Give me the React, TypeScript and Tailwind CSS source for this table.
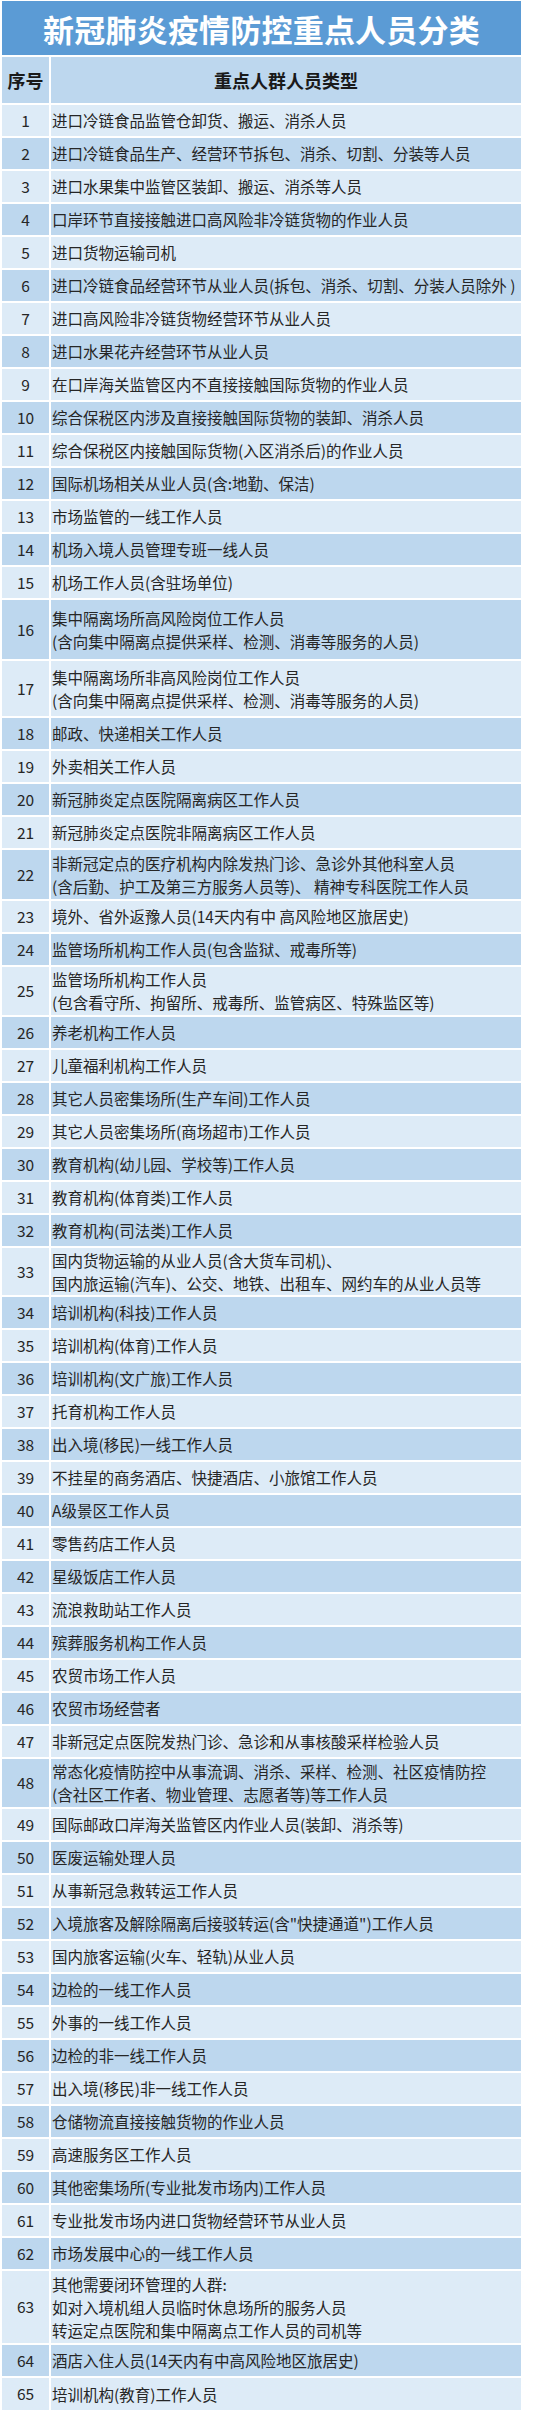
type Row = {
  no: number
  lines: string[]
  h?: string
}

const rows: Row[] = [
  { no: 1, lines: ["进口冷链食品监管仓卸货、搬运、消杀人员"] },
  { no: 2, lines: ["进口冷链食品生产、经营环节拆包、消杀、切割、分装等人员"] },
  { no: 3, lines: ["进口水果集中监管区装卸、搬运、消杀等人员"] },
  { no: 4, lines: ["口岸环节直接接触进口高风险非冷链货物的作业人员"] },
  { no: 5, lines: ["进口货物运输司机"] },
  { no: 6, lines: ["进口冷链食品经营环节从业人员(拆包、消杀、切割、分装人员除外 )"] },
  { no: 7, lines: ["进口高风险非冷链货物经营环节从业人员"] },
  { no: 8, lines: ["进口水果花卉经营环节从业人员"] },
  { no: 9, lines: ["在口岸海关监管区内不直接接触国际货物的作业人员"] },
  { no: 10, lines: ["综合保税区内涉及直接接触国际货物的装卸、消杀人员"] },
  { no: 11, lines: ["综合保税区内接触国际货物(入区消杀后)的作业人员"] },
  { no: 12, lines: ["国际机场相关从业人员(含:地勤、保洁)"] },
  { no: 13, lines: ["市场监管的一线工作人员"] },
  { no: 14, lines: ["机场入境人员管理专班一线人员"] },
  { no: 15, lines: ["机场工作人员(含驻场单位)"] },
  { no: 16, lines: ["集中隔离场所高风险岗位工作人员", "(含向集中隔离点提供采样、检测、消毒等服务的人员)"], h: "h-[59px]" },
  { no: 17, lines: ["集中隔离场所非高风险岗位工作人员", "(含向集中隔离点提供采样、检测、消毒等服务的人员)"], h: "h-[55px]" },
  { no: 18, lines: ["邮政、快递相关工作人员"] },
  { no: 19, lines: ["外卖相关工作人员"] },
  { no: 20, lines: ["新冠肺炎定点医院隔离病区工作人员"] },
  { no: 21, lines: ["新冠肺炎定点医院非隔离病区工作人员"] },
  { no: 22, lines: ["非新冠定点的医疗机构内除发热门诊、急诊外其他科室人员", "(含后勤、护工及第三方服务人员等)、 精神专科医院工作人员"], h: "h-[49px]" },
  { no: 23, lines: ["境外、省外返豫人员(14天内有中 高风险地区旅居史)"] },
  { no: 24, lines: ["监管场所机构工作人员(包含监狱、戒毒所等)"] },
  { no: 25, lines: ["监管场所机构工作人员", "(包含看守所、拘留所、戒毒所、监管病区、特殊监区等)"], h: "h-[48px]" },
  { no: 26, lines: ["养老机构工作人员"] },
  { no: 27, lines: ["儿童福利机构工作人员"] },
  { no: 28, lines: ["其它人员密集场所(生产车间)工作人员"] },
  { no: 29, lines: ["其它人员密集场所(商场超市)工作人员"] },
  { no: 30, lines: ["教育机构(幼儿园、学校等)工作人员"] },
  { no: 31, lines: ["教育机构(体育类)工作人员"] },
  { no: 32, lines: ["教育机构(司法类)工作人员"] },
  { no: 33, lines: ["国内货物运输的从业人员(含大货车司机)、", "国内旅运输(汽车)、公交、地铁、出租车、网约车的从业人员等"], h: "h-[47px]" },
  { no: 34, lines: ["培训机构(科技)工作人员"] },
  { no: 35, lines: ["培训机构(体育)工作人员"] },
  { no: 36, lines: ["培训机构(文广旅)工作人员"] },
  { no: 37, lines: ["托育机构工作人员"] },
  { no: 38, lines: ["出入境(移民)一线工作人员"] },
  { no: 39, lines: ["不挂星的商务酒店、快捷酒店、小旅馆工作人员"] },
  { no: 40, lines: ["A级景区工作人员"] },
  { no: 41, lines: ["零售药店工作人员"] },
  { no: 42, lines: ["星级饭店工作人员"] },
  { no: 43, lines: ["流浪救助站工作人员"] },
  { no: 44, lines: ["殡葬服务机构工作人员"] },
  { no: 45, lines: ["农贸市场工作人员"] },
  { no: 46, lines: ["农贸市场经营者"] },
  { no: 47, lines: ["非新冠定点医院发热门诊、急诊和从事核酸采样检验人员"] },
  { no: 48, lines: ["常态化疫情防控中从事流调、消杀、采样、检测、社区疫情防控", "(含社区工作者、物业管理、志愿者等)等工作人员"], h: "h-[48px]" },
  { no: 49, lines: ["国际邮政口岸海关监管区内作业人员(装卸、消杀等)"] },
  { no: 50, lines: ["医废运输处理人员"] },
  { no: 51, lines: ["从事新冠急救转运工作人员"] },
  { no: 52, lines: ["入境旅客及解除隔离后接驳转运(含\"快捷通道\")工作人员"] },
  { no: 53, lines: ["国内旅客运输(火车、轻轨)从业人员"] },
  { no: 54, lines: ["边检的一线工作人员"] },
  { no: 55, lines: ["外事的一线工作人员"] },
  { no: 56, lines: ["边检的非一线工作人员"] },
  { no: 57, lines: ["出入境(移民)非一线工作人员"] },
  { no: 58, lines: ["仓储物流直接接触货物的作业人员"] },
  { no: 59, lines: ["高速服务区工作人员"] },
  { no: 60, lines: ["其他密集场所(专业批发市场内)工作人员"] },
  { no: 61, lines: ["专业批发市场内进口货物经营环节从业人员"] },
  { no: 62, lines: ["市场发展中心的一线工作人员"] },
  { no: 63, lines: ["其他需要闭环管理的人群:", "如对入境机组人员临时休息场所的服务人员", "转运定点医院和集中隔离点工作人员的司机等"], h: "h-[72px]" },
  { no: 64, lines: ["酒店入住人员(14天内有中高风险地区旅居史)"] },
  { no: 65, lines: ["培训机构(教育)工作人员"], h: "h-[32px]" },
]

export default function App() {
  return (
    <div
      className="w-[536px] bg-white pt-px pl-[2px] text-[#262626]"
      style={{ fontFamily: '"Noto Sans CJK SC", "Microsoft YaHei", sans-serif' }}
    >
      <div className="flex w-[519px] flex-col gap-[2px]">
        <div className="flex h-[54px] items-center justify-center bg-[#5b9bd5]">
          <h1 className="text-[31px] font-bold leading-none tracking-[0.2px] text-white">
            新冠肺炎疫情防控重点人员分类
          </h1>
        </div>

        <div className="flex h-[46px] gap-[2px] text-[18px] font-bold text-[#1a1a1a]">
          <div className="flex w-[47px] items-center justify-center bg-[#bdd7ee]">序号</div>
          <div className="flex flex-1 items-center justify-center bg-[#bdd7ee]">重点人群人员类型</div>
        </div>

        {rows.map((row) => {
          const bg = row.no % 2 === 0 ? "bg-[#bdd7ee]" : "bg-[#ddebf7]"
          return (
            <div key={row.no} className={`flex gap-[2px] text-[15.5px] ${row.h ?? "h-[31px]"}`}>
              <div className={`flex w-[47px] shrink-0 items-center justify-center ${bg}`}>{row.no}</div>
              <div className={`flex flex-1 flex-col justify-center pl-px leading-[23px] ${bg}`}>
                {row.lines.map((line, i) => (
                  <div key={i} className="whitespace-pre">
                    {line}
                  </div>
                ))}
              </div>
            </div>
          )
        })}
      </div>
    </div>
  )
}
